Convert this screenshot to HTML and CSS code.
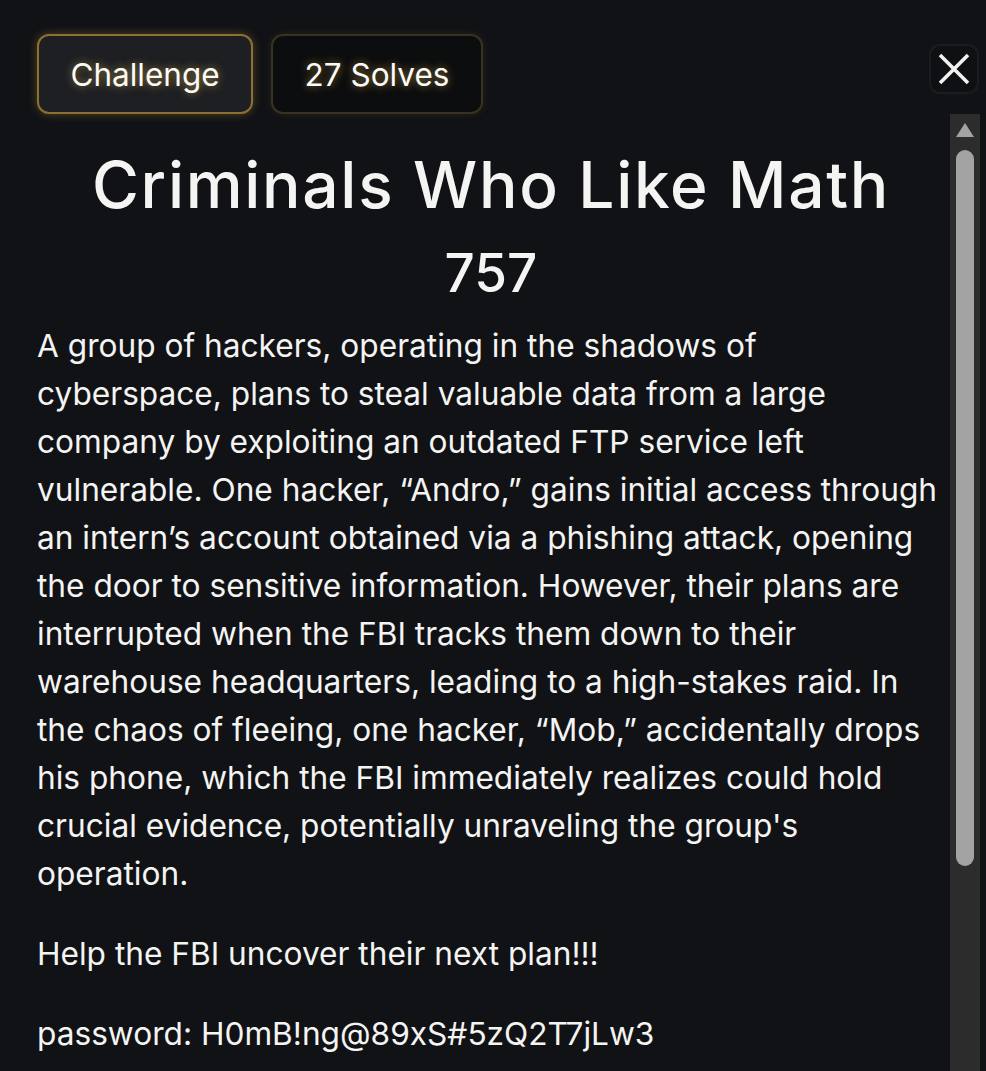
FILE: index.html
```html
<!DOCTYPE html>
<html lang="en">
<head>
<meta charset="utf-8">
<title>Criminals Who Like Math</title>
<link rel="stylesheet" href="styles.css">
</head>
<body>
<div class="modal">
  <header class="topbar">
    <nav class="tabs">
      <button class="tab tab-active">Challenge</button>
      <button class="tab tab-idle">27 Solves</button>
    </nav>
    <button class="close" aria-label="Close">
      <svg width="34" height="34" viewBox="0 0 34 34"><path d="M3 3 L31 31 M31 3 L3 31" stroke="#f2f2f0" stroke-width="3.6" stroke-linecap="butt" fill="none"/></svg>
    </button>
  </header>
  <div class="body-row">
    <section class="content">
      <h1 class="title">Criminals Who Like Math</h1>
      <div class="points">757</div>
      <div class="desc">
        <p>A group of hackers, operating in the shadows of cyberspace, plans to steal valuable data from a large company by exploiting an outdated FTP service left vulnerable. One hacker, “Andro,” gains initial access through an intern’s account obtained via a phishing attack, opening the door to sensitive information. However, their plans are interrupted when the FBI tracks them down to their warehouse headquarters, leading to a high-stakes raid. In the chaos of fleeing, one hacker, “Mob,” accidentally drops his phone, which the FBI immediately realizes could hold crucial evidence, potentially unraveling the group's operation.</p>
        <p>Help the FBI uncover their next plan!!!</p>
        <p>password: H0mB!ng@89xS#5zQ2T7jLw3</p>
      </div>
    </section>
    <div class="scrollbar">
      <div class="arrow"></div>
      <div class="thumb"></div>
    </div>
  </div>
</div>
</body>
</html>
```

FILE: styles.css
```css
* { box-sizing: border-box; }
html, body { margin: 0; padding: 0; height: 100%; }
body {
  background: #111216;
  color: #f4f4f2;
  font-family: "Inter", "Liberation Sans", sans-serif;
  overflow: hidden;
}
.modal {
  height: 100vh;
  display: flex;
  flex-direction: column;
}
.topbar {
  display: flex;
  justify-content: space-between;
  align-items: flex-start;
  padding: 34px 7px 0 37px;
  height: 114px;
  flex: none;
}
.tabs { display: flex; gap: 18px; }
.tab {
  height: 80px;
  border-radius: 12px;
  font-family: inherit;
  font-size: 31.5px;
  font-weight: 400;
  color: #fbfbf8;
  text-shadow: 0 0 8px rgba(255, 205, 90, 0.55);
  cursor: pointer;
  padding: 0;
}
.tab-active {
  width: 216px;
  background: #1d1f23;
  border: 2px solid #8c7032;
  box-shadow: 0 0 10px rgba(200, 160, 60, 0.35);
}
.tab-idle {
  width: 212px;
  background: #0c0d0f;
  border: 2px solid #3a3121;
  box-shadow: 0 0 8px rgba(200, 160, 60, 0.12);
}
.close {
  margin-top: 10px;
  width: 50px;
  height: 50px;
  border-radius: 11px;
  border: 2px solid #1b1c20;
  background: #0f1014;
  display: flex;
  align-items: center;
  justify-content: center;
  padding: 0;
}
.body-row {
  flex: 1;
  display: flex;
  min-height: 0;
}
.content {
  flex: 1;
  padding: 0 5px 0 37px;
  overflow: hidden;
}
.title {
  margin: 31px 0 0;
  text-align: center;
  font-size: 64px;
  font-weight: 500;
  letter-spacing: 1.7px;
  line-height: 80px;
}
.points {
  text-align: center;
  font-size: 53px;
  font-weight: 500;
  line-height: 64px;
  margin-top: 16px;
}
.desc {
  margin-top: 17px;
  font-size: 31.65px;
  line-height: 48px;
}
.desc p { margin: 0 0 32px; }
.scrollbar {
  width: 30px;
  margin-right: 6px;
  background: #2c2c2c;
  display: flex;
  flex-direction: column;
  align-items: center;
  padding-top: 9px;
  flex: none;
}
.arrow {
  width: 0;
  height: 0;
  border-left: 9px solid transparent;
  border-right: 9px solid transparent;
  border-bottom: 14px solid #a3a3a3;
}
.thumb {
  margin-top: 13px;
  width: 18px;
  height: 716px;
  border-radius: 9px;
  background: #a3a3a3;
}
```
